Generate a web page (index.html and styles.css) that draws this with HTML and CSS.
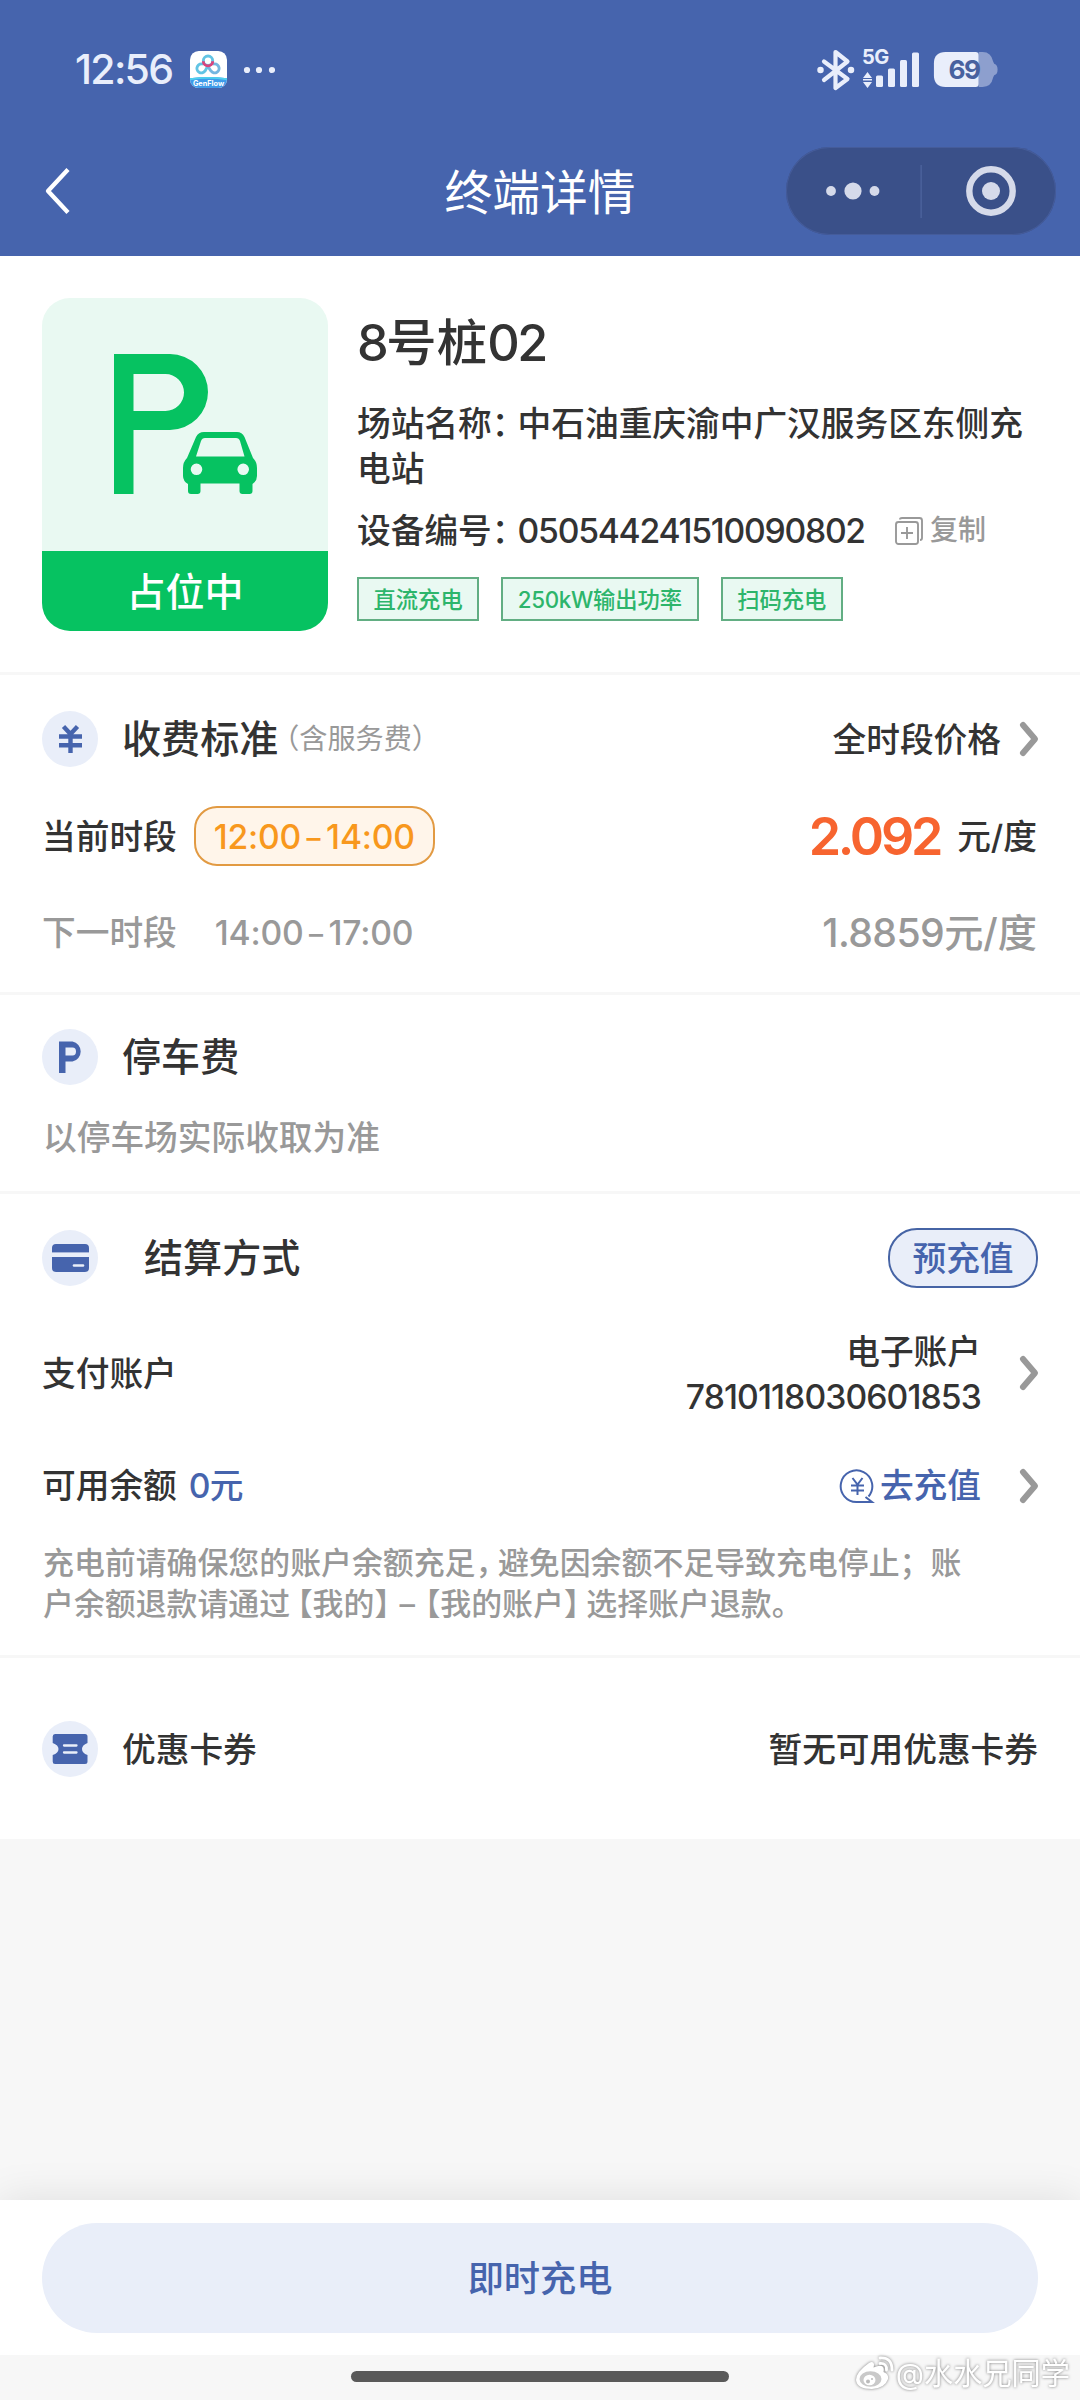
FILE: index.html
```html
<!DOCTYPE html>
<html lang="zh-CN">
<head>
<meta charset="utf-8">
<title>终端详情</title>
<link rel="stylesheet" href="styles.css">
</head>
<body>
<div class="page">
  <header class="header">
    <div class="status">
      <div class="status-left">
        <span class="clock">12:56</span>
        <svg class="app" width="37" height="37" viewBox="0 0 38 38">
          <defs><clipPath id="appClip"><rect width="38" height="38" rx="9"/></clipPath></defs>
          <g clip-path="url(#appClip)">
            <rect width="38" height="38" fill="#fff"/>
            <path d="M0 28Q19 25.500 38 28V38H0Z" fill="#3f9bea"/>
            <path d="M0 28Q19 25.500 38 28V30Q19 27 0 30Z" fill="#4fd0ee"/>
            <g fill="none" stroke-width="3">
              <path d="M18.500 15L15.500 20.500A4.600 4.600 0 1 1 13.500 13.600" stroke="#62c4e4"/>
              <path d="M23.500 13.600A4.600 4.600 0 1 1 21.500 20.500L18.500 16" stroke="#74b6e0"/>
              <circle cx="18.500" cy="10" r="4.800" stroke="#62c4e4"/>
              <path d="M13.700 10.500a4.800 4.800 0 0 0 9.600 0" stroke="#d8447e"/>
            </g>
            <text x="19" y="35.500" text-anchor="middle" class="app-name">GenFlow</text>
          </g>
        </svg>
        <svg class="more" width="32" height="8" viewBox="0 0 32 8" fill="#e9eefb"><circle cx="4" cy="4" r="3.100"/><circle cx="16" cy="4" r="3.100"/><circle cx="29" cy="4" r="3.100"/></svg>
      </div>
      <div class="status-right">
        <svg width="38" height="42" viewBox="0 0 38 42" fill="none" stroke="#e9eefb" stroke-width="4.200" stroke-linejoin="round" stroke-linecap="round"><path d="M7 12.500L30.500 30 18.500 39V3L30.500 12.500 7 31"/><path d="M3.500 21l0 0M34 21l0 0" stroke-width="6.500"/></svg>
        <svg class="signal" width="60" height="42" viewBox="0 0 60 42" fill="#e9eefb"><text x="1" y="15.500" class="net">5G</text><path d="M6.500 24l4.500 6H2zM6.500 40l4.500-6H2z"/><rect x="2" y="31" width="9" height="1.500"/><rect x="15" y="27.500" width="7" height="11.500" rx="1.500"/><rect x="27" y="20.500" width="7" height="18.500" rx="1.500"/><rect x="39" y="12" width="7" height="27" rx="1.500"/><rect x="51" y="4.500" width="7" height="34.500" rx="1.500"/></svg>
        <svg width="66" height="35" viewBox="0 0 66 36"><path d="M46 0h4q9 0 11 10l1 2q3.500 1 3.500 6t-3.500 6l-1 2q-2 10-11 10h-4z" fill="#8d9fce"/><path d="M12 0H43q3 0 3 3v30q0 3-3 3H12Q0 36 0 24V12Q0 0 12 0z" fill="#e9eefb"/><text x="31" y="28" text-anchor="middle" class="level">69</text></svg>
      </div>
    </div>
    <div class="nav">
      <svg class="back" width="28" height="50" viewBox="0 0 28 50" fill="none" stroke="#fff" stroke-width="4.300" stroke-linejoin="round"><path d="M26 3.500L6 25l20 21.500"/></svg>
      <h1>终端详情</h1>
      <div class="capsule">
        <svg width="270" height="88" viewBox="0 0 270 88" fill="#d5daea"><circle cx="45" cy="44" r="4.900"/><circle cx="67" cy="44" r="8.600"/><circle cx="88.500" cy="44" r="4.900"/><rect x="134.500" y="18" width="1.200" height="53" fill="#4f65a0"/><circle cx="205" cy="44" r="21.700" fill="none" stroke="#d5daea" stroke-width="6.400"/><circle cx="205" cy="44" r="9"/></svg>
      </div>
    </div>
  </header>

  <section class="station">
    <div class="state-card">
      <svg width="286" height="253" viewBox="42 298 286 253" fill="#06c261">
        <path fill-rule="evenodd" d="M114 354H170A38 38 0 0 1 170 430H133.500V494H114ZM133.500 374V411H165.500A18.500 18.500 0 0 0 165.500 374Z"/>
        <path fill-rule="evenodd" d="M204 432H237Q242 432 244.500 437L253 458Q257 462 257 468V476Q257 481 252.500 484V491Q252.500 494 249.500 494H242.500Q239.500 494 239.500 491V483.500H200.500V491Q200.500 494 197.500 494H191Q188 494 188 491V484Q183 481 183 476V468Q183 462 187 458L196 437Q198.500 432 204 432ZM205 438Q202 438 201 441L196 456.500H244.500L240 441Q239 438 236 438ZM196.500 463.500A5.800 5.800 0 1 0 196.500 475.100A5.800 5.800 0 1 0 196.500 463.500ZM243.200 463.500A5.800 5.800 0 1 0 243.200 475.100A5.800 5.800 0 1 0 243.200 463.500Z"/>
      </svg>
      <div class="state">占位中</div>
    </div>
    <div class="station-info">
      <h2><i class="num">8</i>号桩<i class="num">02</i></h2>
      <p class="place">场站名称<span class="colon">：</span>中石油重庆渝中广汉服务区东侧充<br>电站</p>
      <div class="device"><span>设备编号<span class="colon">：</span><span class="serial">050544241510090802</span></span>
        <span class="copy"><svg width="28" height="28" viewBox="0 0 28 28" fill="none" stroke="#999" stroke-width="1.900"><rect x="1" y="5" width="22" height="22" rx="2.500"/><path d="M5 2.500Q5 1 7 1H24.500Q27 1 27 3.500V21Q27 23 25 23M12 10v12M6 16h12"/></svg>复制</span></div>
      <div class="tags"><span>直流充电</span><span><i class="kw">250kW</i>输出功率</span><span>扫码充电</span></div>
    </div>
  </section>

  <section class="fees">
    <div class="row head">
      <svg class="badge" viewBox="0 0 56 56"><circle cx="28" cy="28" r="28" fill="#e9eef9"/><path d="M21.500 15.500L28.500 23L35.500 15.500M17 25.500H40M17 34.300H40M28.500 23V42" fill="none" stroke="#4664ad" stroke-width="4.400"/></svg>
      <h3>收费标准</h3><span class="note">（含服务费）</span>
      <span class="right link">全时段价格<svg class="chev" viewBox="0 0 18 34"><path d="M3 3L15 17L3 31"/></svg></span>
    </div>
    <div class="row now"><span>当前时段</span><span class="period">12:00<b>–</b>14:00</span>
      <span class="right"><strong class="price">2.092</strong><span class="unit">元/度</span></span></div>
    <div class="row next"><span>下一时段</span><span class="period-next">14:00<b>–</b>17:00</span>
      <span class="right price-next"><i>1.8859</i>元/度</span></div>
  </section>

  <section class="parking">
    <div class="row head">
      <svg class="badge" viewBox="0 0 56 56"><circle cx="28" cy="28" r="28" fill="#e9eef9"/><path fill-rule="evenodd" d="M17 12.500H30.500A10.200 10.200 0 0 1 30.500 32.500H23.500V44H17ZM23.500 18.500V26.500H30.500Q34 26.500 34 22.500Q34 18.500 30.500 18.500Z" fill="#4664ad"/></svg>
      <h3>停车费</h3>
    </div>
    <p>以停车场实际收取为准</p>
  </section>

  <section class="settle">
    <div class="row head wide">
      <svg class="badge" viewBox="0 0 56 56"><circle cx="28" cy="28" r="28" fill="#e9eef9"/><path d="M10 22V18Q10 14 14 14H43Q47 14 47 18V22ZM10 27H47V38Q47 42 43 42H14Q10 42 10 38Z" fill="#4664ad"/><path d="M10 22H47V23H10Z" fill="#a8b6da"/><path d="M32 35.500H41" stroke="#e9eef9" stroke-width="2.600" stroke-linecap="round"/></svg>
      <h3>结算方式</h3>
      <span class="right prepaid">预充值</span>
    </div>
    <div class="row account"><span>支付账户</span>
      <span class="right link"><span class="acct">电子账户<br><i>7810118030601853</i></span><svg class="chev" viewBox="0 0 18 34"><path d="M3 3L15 17L3 31"/></svg></span></div>
    <div class="row balance"><span>可用余额</span><span class="amount"><i>0</i>元</span>
      <span class="right link"><span class="topup"><svg width="36" height="36" viewBox="0 0 36 36" fill="none" stroke="#4664ad" stroke-width="2"><path d="M29.500 28.500A15.800 15.800 0 1 0 18 34H33L26.500 29"/><path d="M13.500 10l5 6.500 5-6.500M12 17.500h13M12 22.500h13M18.500 16.500V27"/></svg>去充值</span><svg class="chev" viewBox="0 0 18 34"><path d="M3 3L15 17L3 31"/></svg></span></div>
    <p class="tip">充电前请确保您的账户余额充足<span class="close">，</span>避免因余额不足导致充电停止；账<br>户余额退款请通过<span class="open">【</span>我的<span class="close">】</span><span class="dash">–</span><span class="open">【</span>我的账户<span class="close">】</span>选择账户退款。</p>
  </section>

  <section class="coupon">
    <div class="row head">
      <svg class="badge" viewBox="0 0 56 56"><circle cx="28" cy="28" r="28" fill="#e9eef9"/><path d="M13 13H43Q45.500 13 45.500 15.500V22Q40 24 40 28T45.500 34V40.500Q45.500 43 43 43H13Q10.700 43 10.700 40.500V34Q16.500 32 16.500 28T10.700 22V15.500Q10.700 13 13 13Z" fill="#4664ad"/><path d="M22 24.500H34.500M22 31.500H34.500" stroke="#e9eef9" stroke-width="2.300" stroke-linecap="round"/></svg>
      <span class="coupon-name">优惠卡券</span>
      <span class="right">暂无可用优惠卡券</span>
    </div>
  </section>

  <div class="blank"></div>
  <footer class="footer"><button>即时充电</button></footer>
  <div class="gesture"><div class="bar"></div>
    <div class="watermark">
      <svg width="40" height="36" viewBox="0 0 40 36"><path d="M15 7Q19 4.500 20 8Q20 10 19.500 11.500Q28 8 29.500 12Q30 14 29.500 16Q35 18 34 23Q31 32 18 33Q3 33 2 24Q2 16 15 7Z" fill="#fff"/><path d="M26 2Q38 1 38 14M26 7.500Q33 7 32.500 14" fill="none" stroke="#fff" stroke-width="2.800" stroke-linecap="round"/><ellipse cx="16.500" cy="23" rx="11" ry="7.800" fill="#c9c9c9"/><ellipse cx="15.500" cy="24" rx="6" ry="5.300" fill="#fff"/><circle cx="14" cy="25.500" r="2" fill="#bbb"/><circle cx="18" cy="23" r="1" fill="#bbb"/></svg>
      <span>@水水兄同学</span>
    </div>
  </div>
</div>
</body>
</html>
```
FILE: styles.css
```css
* { box-sizing: border-box; margin: 0; padding: 0; }
body { background: #f7f7f7; }
i { font-style: normal; }
b { font-weight: inherit; }
svg { display: block; flex: none; }
h1, h2, h3 { font-weight: 500; }

.page {
  width: 1080px; height: 2400px; overflow: hidden;
  display: flex; flex-direction: column;
  font-family: Inter, "Noto Sans CJK SC", sans-serif;
  font-size: 33.7px; line-height: 45px; font-weight: 500; color: #333;
  white-space: nowrap;
}

/* Header */
.header { height: 256px; background: #4664ad; flex: none; }
.status { height: 139px; display: flex; justify-content: space-between; padding: 0 81px 0 75px; align-items: center; }
.status-left, .status-right { display: flex; align-items: center; }
.clock { font-size: 41px; letter-spacing: -1.7px; width: 115px; color: #e9eefb; }
.app-name { font: 700 7.5px Inter, sans-serif; fill: #fff; }
.more { margin-left: 16px; }
.signal { margin: -2px 12px 0 6px; overflow: visible; }
.net { font: 700 20px Inter, sans-serif; letter-spacing: -0.5px; }
.level { font: 700 27px Inter, sans-serif; letter-spacing: -1.5px; fill: #48619f; }
.nav { height: 104px; display: grid; grid-template-columns: 270px 1fr 270px; align-items: center; padding: 0 24px 0 42px; }
.nav h1 { color: #fff; font-size: 47.8px; line-height: 60px; font-weight: 400; text-align: center; padding: 3px 18px 0 0; }
.capsule { height: 88px; border-radius: 44px; background: #3a5089; box-shadow: inset 0 0 0 1px #455c9a; }

/* Station */
section { background: #fff; border-bottom: 3px solid #f7f7f7; padding: 0 42px; flex: none; }
.station { height: 419px; padding-top: 42px; display: flex; gap: 29px; }
.state-card { width: 286px; height: 333px; border-radius: 28px; overflow: hidden; background: #e9f9f2; }
.state { height: 80px; background: #06c261; color: #fff; font-size: 39px; line-height: 82px; text-align: center; }
.station-info { width: 680px; }
.station-info h2 { font-size: 50.4px; line-height: 60px; margin-top: 15px; }
.num { letter-spacing: -2.4px; }
.place { margin-top: 28px; }
.colon { font-feature-settings: "halt"; margin-right: 9px; }
.device { margin-top: 17px; display: flex; align-items: center; }
.serial { letter-spacing: -1.25px; }
.copy { display: flex; align-items: center; gap: 7px; margin-left: 30px; color: #999; font-size: 28px; }
.tags { display: flex; gap: 22px; margin-top: 24px; }
.tags span { height: 44px; padding: 0 14.5px; border: 2px solid #62ae83; background: #e9f9f2; color: #2db56b; font-size: 22.3px; line-height: 41px; }
.kw { letter-spacing: -0.3px; }

/* Rows */
.row { display: flex; align-items: center; }
.right { margin-left: auto; display: flex; align-items: center; }
.badge { width: 56px; height: 56px; margin-right: 24px; }
h3 { font-size: 39.1px; line-height: 56px; }
.chev { width: 18px; height: 34px; fill: none; stroke: #999; stroke-width: 6; stroke-linecap: round; stroke-linejoin: round; overflow: visible; }
.link .chev { margin-left: 19px; }

.fees { height: 320px; padding-top: 36px; }
.note { font-size: 28.1px; line-height: 46px; color: #999; margin-left: 7px; font-weight: 400; font-feature-settings: "halt"; }
.now { margin-top: 39px; height: 60px; padding-right: 1px; }
.period { margin-left: 17px; width: 241px; height: 60px; border: 2px solid #e29a42; border-radius: 23px; background: #fff5ea; color: #f8981d; line-height: 58px; text-align: center; letter-spacing: -0.2px; }
.period b, .period-next b { display: inline-block; width: 25px; text-align: center; font-size: 28px; line-height: 30px; vertical-align: 1px; letter-spacing: 0; }
.price { font-size: 52px; font-weight: 600; letter-spacing: -3.2px; color: #f7642f; }
.unit { margin-left: 17px; }
.next { margin-top: 36px; height: 60px; padding-right: 1px; color: #999; }
.period-next { margin-left: 38px; letter-spacing: -0.2px; }
.price-next { font-size: 39.2px; }
.price-next i { letter-spacing: -0.6px; }

.parking { height: 199px; padding-top: 34px; }
.parking p { margin: 30px 0 0 1px; color: #999; }

.settle { height: 464px; padding-top: 34px; }
.settle .wide { height: 60px; }
.wide .badge { margin-right: 46px; }
.prepaid { width: 150px; height: 60px; justify-content: center; border: 2px solid #4664a5; border-radius: 29px; background: #e9eef9; color: #4664ad; }
.account { margin-top: 40px; height: 90px; }
.acct { text-align: right; padding-top: 1px; }
.acct i { letter-spacing: -0.9px; }
.account .chev, .balance .chev { margin-left: 39px; }
.balance { margin-top: 45px; height: 45px; }
.amount { color: #4664ad; margin-left: 12px; }
.amount i { letter-spacing: -0.7px; }
.topup { display: flex; align-items: center; gap: 5px; color: #4664ad; }
.tip { margin: 34px 0 0 1px; font-size: 30.9px; line-height: 41px; color: #999; }
.close { font-feature-settings: "halt"; margin-right: 7px; }
.open { font-feature-settings: "halt"; margin-left: 7px; }
.dash { display: inline-block; width: 21px; text-align: center; }

.coupon { height: 181px; padding-top: 63px; border-bottom: 0; }

/* Bottom */
.blank { height: 361px; flex: none; }
.footer { height: 155px; flex: none; background: #fff; padding: 23px 42px; box-shadow: 0 0 40px rgba(0, 0, 0, 0.1); }
.footer button { display: block; width: 996px; height: 110px; border: 0; border-radius: 55px; background: #e9eef9; color: #4664ad; font: 500 36.2px/112px Inter, "Noto Sans CJK SC", sans-serif; }
.gesture { position: relative; height: 45px; flex: none; background: #f7f7f7; }
.bar { width: 378px; height: 11px; margin: 16px auto 0 351px; border-radius: 6px; background: #5a5a5a; }
.watermark { position: absolute; right: 10px; top: -1px; display: flex; align-items: center; gap: 2px; color: #fff; font-size: 29.2px; line-height: 40px; font-weight: 400; filter: drop-shadow(0 0 1.5px rgba(0, 0, 0, 0.5)); }
```
